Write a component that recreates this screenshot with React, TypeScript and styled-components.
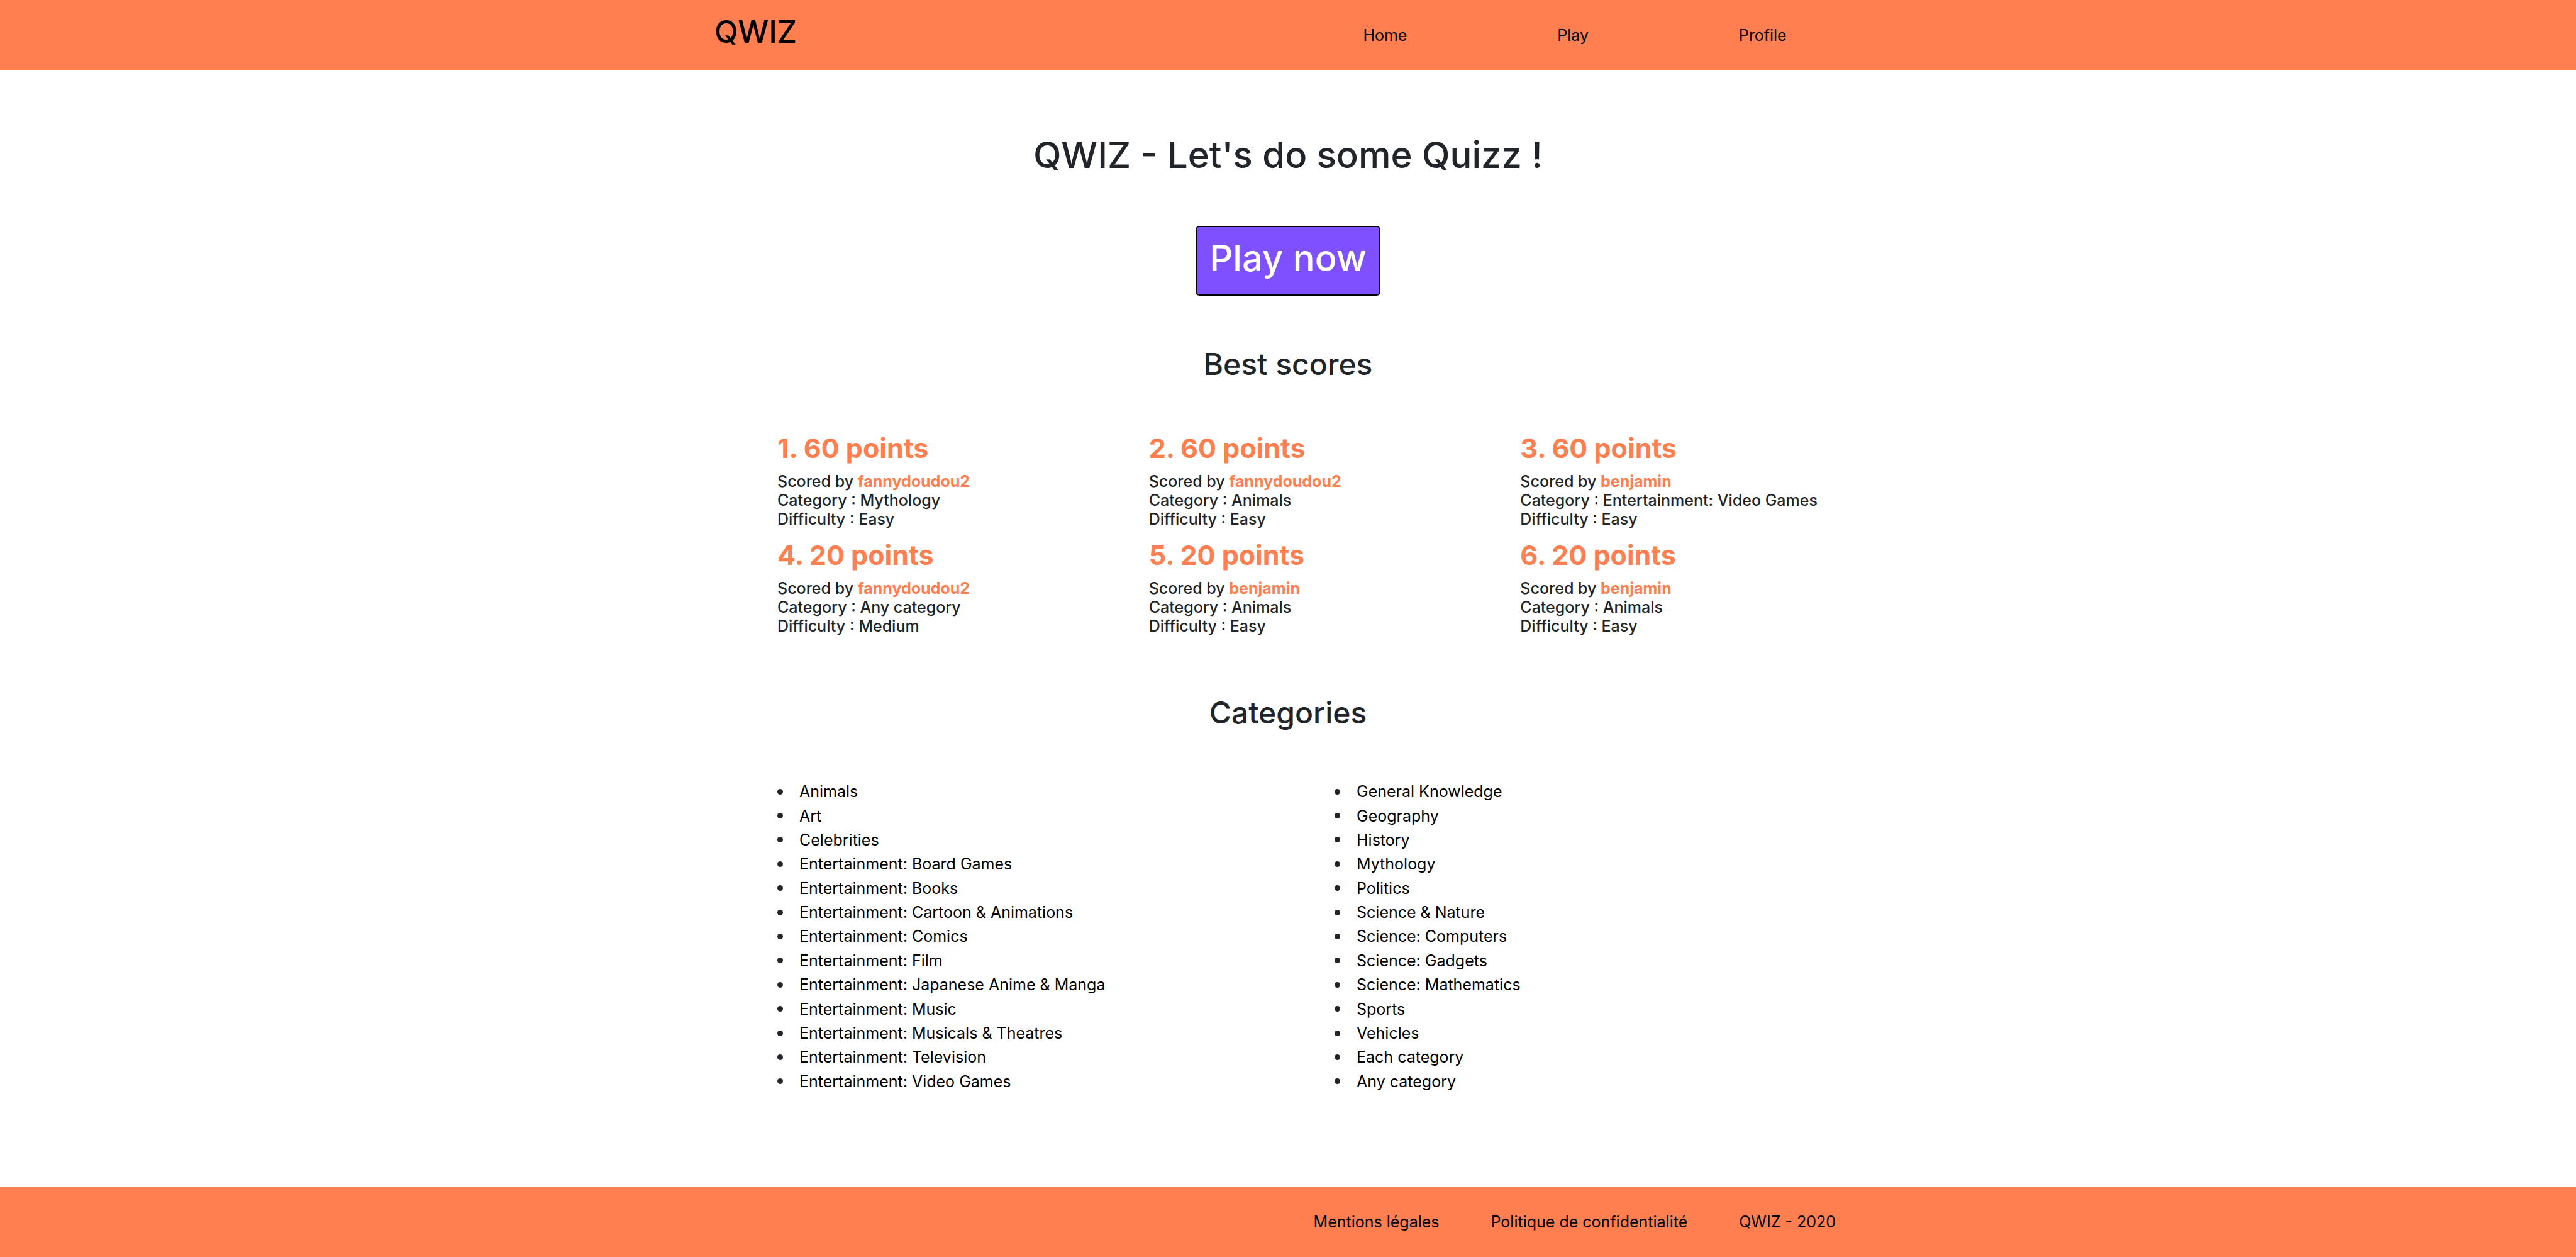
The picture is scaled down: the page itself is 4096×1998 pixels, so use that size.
import React from "react";
import styled, { createGlobalStyle } from "styled-components";

const coral = "#ff7f50";
const violet = "#7f50ff";
const ink = "#212529";

const GlobalStyle = createGlobalStyle`
  *, *::before, *::after {
    box-sizing: border-box;
  }
  body {
    margin: 0;
    background: #fff;
    color: ${ink};
    font-family: Inter, "Liberation Sans", sans-serif;
    font-size: 25px;
    line-height: 38px;
  }
  h1, h2, h3, p, ul, ol {
    margin: 0;
    padding: 0;
  }
  ul, ol {
    list-style: none;
  }
`;

const Page = styled.div`
  display: flex;
  flex-direction: column;
  min-height: 100vh;
`;

const Container = styled.div`
  width: 100%;
  max-width: 1824px;
  margin: 0 auto;
`;

const Header = styled.header`
  display: flex;
  background: ${coral};
`;

const HeaderRow = styled(Container)`
  display: grid;
  grid-template-columns: 1fr 1fr;
  align-items: center;
  min-height: 112px;
`;

const TextLink = styled.a`
  color: #000;
  text-decoration: none;
`;

const Logo = styled(TextLink)`
  padding-bottom: 10px;
  font-size: 49px;
  font-weight: 500;
  line-height: 60px;
`;

const NavList = styled.ul`
  display: flex;
  justify-content: space-around;
`;

const Main = styled.main`
  display: flex;
  flex: 1;
  flex-direction: column;
  padding: 99px 0 148px;
`;

const Content = styled(Container)`
  display: flex;
  flex: 1;
  flex-direction: column;
  align-items: center;
`;

const Title = styled.h1`
  margin-bottom: 78px;
  font-size: 58px;
  font-weight: 500;
  line-height: 70px;
`;

const PlayButton = styled.button`
  padding: 14px 20px 23px;
  border: 2px solid #000;
  border-radius: 6px;
  background: ${violet};
  color: #fff;
  font-family: inherit;
  font-size: 58px;
  font-weight: 500;
  line-height: 70px;
  cursor: pointer;
`;

const Section = styled.section<{ $grow?: boolean; $gap: number }>`
  display: flex;
  flex: ${(p) => (p.$grow ? "1" : "none")};
  flex-direction: column;
  width: 100%;
  padding-top: ${(p) => p.$gap}px;
`;

const SectionTitle = styled.h2`
  margin-bottom: 77px;
  font-size: 48px;
  font-weight: 500;
  line-height: 58px;
  text-align: center;
`;

const ScoreGrid = styled.ol`
  display: grid;
  grid-template-columns: repeat(3, 1fr);
  row-gap: 15px;
  margin: 0 -48px 0 100px;
`;

const ScoreTitle = styled.h3`
  margin-bottom: 11px;
  color: ${coral};
  font-size: 43px;
  font-weight: 700;
  line-height: 54px;
`;

const ScoreLine = styled.p`
  font-weight: 500;
  line-height: 30px;
`;

const Player = styled.strong`
  color: ${coral};
  font-weight: 700;
`;

const CategoryColumns = styled.div`
  display: grid;
  flex: 1;
  grid-template-columns: repeat(2, 1fr);
  margin: 0 -48px 0 100px;
`;

const CategoryList = styled.ul`
  display: grid;
  grid-auto-rows: 1fr;
`;

const Category = styled.li`
  display: flex;
  align-items: center;
  gap: 26px;

  &::before {
    content: "";
    width: 9px;
    height: 9px;
    border-radius: 50%;
    background: ${ink};
  }
`;

const Footer = styled.footer`
  display: flex;
  background: ${coral};
`;

const FooterList = styled.ul`
  display: flex;
  align-items: center;
  justify-content: flex-end;
  min-height: 112px;
`;

const FooterItem = styled.li`
  padding: 0 41px;
  color: #000;
`;

const navigation = ["Home", "Play", "Profile"];

const scores = [
  { points: 60, player: "fannydoudou2", category: "Mythology", difficulty: "Easy" },
  { points: 60, player: "fannydoudou2", category: "Animals", difficulty: "Easy" },
  { points: 60, player: "benjamin", category: "Entertainment: Video Games", difficulty: "Easy" },
  { points: 20, player: "fannydoudou2", category: "Any category", difficulty: "Medium" },
  { points: 20, player: "benjamin", category: "Animals", difficulty: "Easy" },
  { points: 20, player: "benjamin", category: "Animals", difficulty: "Easy" },
];

const categories = [
  [
    "Animals",
    "Art",
    "Celebrities",
    "Entertainment: Board Games",
    "Entertainment: Books",
    "Entertainment: Cartoon & Animations",
    "Entertainment: Comics",
    "Entertainment: Film",
    "Entertainment: Japanese Anime & Manga",
    "Entertainment: Music",
    "Entertainment: Musicals & Theatres",
    "Entertainment: Television",
    "Entertainment: Video Games",
  ],
  [
    "General Knowledge",
    "Geography",
    "History",
    "Mythology",
    "Politics",
    "Science & Nature",
    "Science: Computers",
    "Science: Gadgets",
    "Science: Mathematics",
    "Sports",
    "Vehicles",
    "Each category",
    "Any category",
  ],
];

export default function App() {
  return (
    <Page>
      <GlobalStyle />
      <Header>
        <HeaderRow>
          <Logo href="#home">QWIZ</Logo>
          <nav>
            <NavList>
              {navigation.map((label) => (
                <li key={label}>
                  <TextLink href={`#${label.toLowerCase()}`}>{label}</TextLink>
                </li>
              ))}
            </NavList>
          </nav>
        </HeaderRow>
      </Header>

      <Main>
        <Content>
          <Title>QWIZ - Let's do some Quizz !</Title>
          <PlayButton type="button">Play now</PlayButton>

          <Section $gap={80}>
            <SectionTitle>Best scores</SectionTitle>
            <ScoreGrid>
              {scores.map((score, index) => (
                <li key={index}>
                  <ScoreTitle>{`${index + 1}. ${score.points} points`}</ScoreTitle>
                  <ScoreLine>
                    Scored by <Player>{score.player}</Player>
                  </ScoreLine>
                  <ScoreLine>{`Category : ${score.category}`}</ScoreLine>
                  <ScoreLine>{`Difficulty : ${score.difficulty}`}</ScoreLine>
                </li>
              ))}
            </ScoreGrid>
          </Section>

          <Section $gap={94} $grow>
            <SectionTitle>Categories</SectionTitle>
            <CategoryColumns>
              {categories.map((column) => (
                <CategoryList key={column[0]}>
                  {column.map((name) => (
                    <Category key={name}>
                      <TextLink href="#play">{name}</TextLink>
                    </Category>
                  ))}
                </CategoryList>
              ))}
            </CategoryColumns>
          </Section>
        </Content>
      </Main>

      <Footer>
        <Container>
          <FooterList>
            <FooterItem>
              <TextLink href="#legal">Mentions légales</TextLink>
            </FooterItem>
            <FooterItem>
              <TextLink href="#privacy">Politique de confidentialité</TextLink>
            </FooterItem>
            <FooterItem>QWIZ - 2020</FooterItem>
          </FooterList>
        </Container>
      </Footer>
    </Page>
  );
}
